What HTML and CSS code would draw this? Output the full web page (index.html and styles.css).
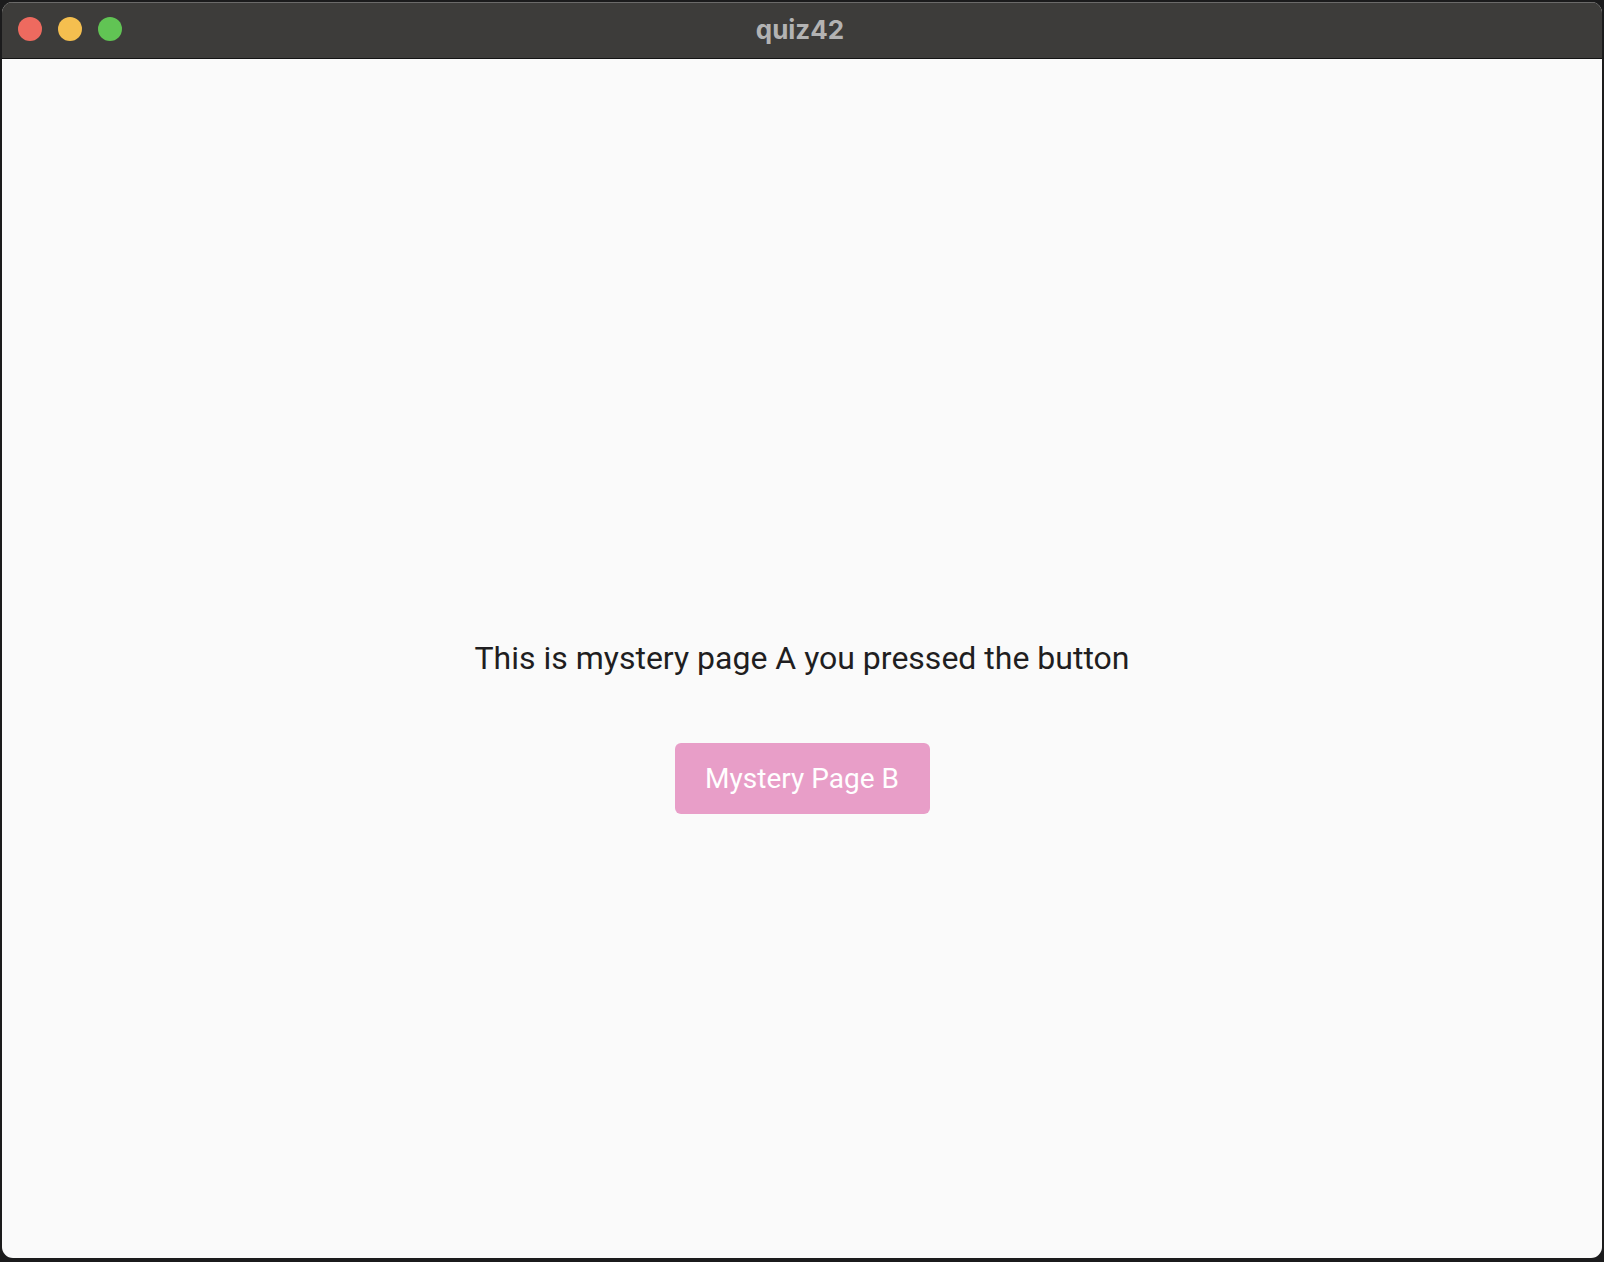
FILE: index.html
```html
<!DOCTYPE html>
<html>
<head>
<meta charset="utf-8">
<link rel="stylesheet" href="styles.css">
</head>
<body>
<div class="window">
  <div class="titlebar">
    <div class="lights">
      <span class="light red"></span>
      <span class="light yellow"></span>
      <span class="light green"></span>
    </div>
    <div class="title">quiz42</div>
  </div>
  <div class="content">
    <p class="message">This is mystery page A you pressed the button</p>
    <button class="btn">Mystery Page B</button>
  </div>
</div>
</body>
</html>
```

FILE: styles.css
```css
html, body {
  margin: 0;
  padding: 0;
  width: 1604px;
  height: 1262px;
  background: #1b1b1c;
  overflow: hidden;
}
.window {
  margin: 2px 0 0 2px;
  width: 1600px;
  height: 1256px;
  border-radius: 11px;
  overflow: hidden;
  display: flex;
  flex-direction: column;
  background: #fafafa;
}
.titlebar {
  height: 55px;
  background: #3d3c3a;
  border-top: 1px solid #6b6a69;
  border-bottom: 1px solid #141414;
  position: relative;
  display: flex;
  align-items: center;
  justify-content: center;
  flex-shrink: 0;
}
.lights {
  position: absolute;
  left: 16px;
  top: 14px;
  display: flex;
  gap: 16px;
}
.light {
  width: 24px;
  height: 24px;
  border-radius: 50%;
  display: block;
}
.red { background: #ee6a5f; }
.yellow { background: #f5bf4f; }
.green { background: #61c454; }
.title {
  font-family: "Inter", "Liberation Sans", sans-serif;
  font-weight: 700;
  font-size: 26px;
  color: #b3b3b3;
  margin-top: -3px;
  margin-right: 4px;
}
.content {
  flex: 1;
  display: flex;
  flex-direction: column;
  align-items: center;
  padding-top: 579px;
}
.message {
  margin: 0;
  font-family: "Roboto", sans-serif;
  font-size: 32px;
  line-height: 40px;
  color: #1f1e21;
}
.btn {
  margin-top: 65px;
  width: 255px;
  height: 71px;
  border: none;
  border-radius: 6px;
  background: #e89ec8;
  color: #ffffff;
  font-family: "Roboto", sans-serif;
  font-size: 28px;
  padding: 0;
}
```
